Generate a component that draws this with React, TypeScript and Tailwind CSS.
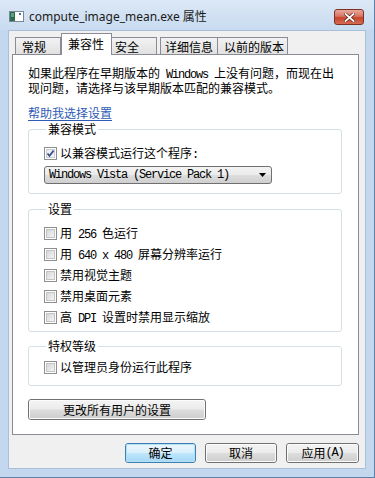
import React from 'react';

const L = ({ children }: { children: React.ReactNode }) => (
  <span className="font-['Liberation_Mono',monospace] text-[12px] leading-none tracking-[-1.2px] whitespace-pre">{children}</span>
);

function Check({ checked, children }: { checked?: boolean; children: React.ReactNode }) {
  return (
    <div className="flex items-center gap-[3px] h-[14px] leading-[14px]">
      <div className="w-[13px] h-[13px] border border-[#8e8f8f] bg-white p-[1px] shrink-0">
        <div className={`w-full h-full relative ${checked ? 'bg-gradient-to-br from-[#e9ecf3] to-[#f7f8fb] border border-[#c6cbd6]' : 'bg-gradient-to-br from-[#d6d7d9] to-[#f4f4f4] border border-[#c4c4c4]'}`}>
          {checked && (
            <svg viewBox="0 0 9 9" className="absolute -left-[1px] -top-[1px] w-[9px] h-[9px]">
              <path d="M1.5 4.5 L3.5 6.8 L7.6 1.6" fill="none" stroke="#3c4f86" strokeWidth="1.7" />
            </svg>
          )}
        </div>
      </div>
      <span>{children}</span>
    </div>
  );
}

function Group({ label, children, className }: { label: string; children: React.ReactNode; className: string }) {
  return (
    <fieldset className={`w-[314px] border border-[#d5dfe5] rounded-[3px] pl-[15px] ${className}`}>
      <legend className="ml-[2px] px-[2px] leading-[14px]">{label}</legend>
      {children}
    </fieldset>
  );
}

function Btn({ children, def, className }: { children: React.ReactNode; def?: boolean; className: string }) {
  return (
    <div className={`rounded-[3px] border ${def ? 'border-[#3c7fb1]' : 'border-[#707070]'} flex items-center justify-center leading-[14px] ${className}`}>
      <div className={`w-full h-full rounded-[2px] border ${def ? 'border-[#b4e0f7] bg-[linear-gradient(to_bottom,#eaf6fd_0%,#d9f0fc_48%,#bee6fd_52%,#a7d9f5_100%)]' : 'border-[#fbfbfb] bg-[linear-gradient(to_bottom,#f3f3f3_0%,#ebebeb_48%,#dddddd_52%,#cfcfcf_100%)]'} flex items-center justify-center`}>
        {children}
      </div>
    </div>
  );
}

export default function App() {
  return (
    <div className="w-[375px] h-[478px] flex flex-col bg-[#c3d7ee] border-r border-b border-[#5f80a6] font-['Noto_Sans_CJK_SC',sans-serif] text-[12px] text-black overflow-hidden">
      {/* title bar */}
      <div className="h-[30px] shrink-0 flex items-start px-[8px] bg-gradient-to-b from-[#dce8f5] to-[#c8dbf0]">
        <svg width="16" height="16" viewBox="0 0 16 16" className="mt-[8px] ml-[1px]">
          <rect x="0.5" y="3.5" width="14" height="10" fill="#ffffff" stroke="#7a8796" />
          <rect x="1" y="4" width="5" height="9" fill="#2e6b4f" />
          <rect x="2" y="5" width="3" height="4" fill="#5aa27a" />
          <rect x="10" y="5" width="2" height="2" fill="#4a6fa8" />
        </svg>
        <span className="ml-[4px] mt-[9px] font-['Noto_Sans','Noto_Sans_CJK_SC',sans-serif] text-[12px] leading-[16px] text-[#1a1a1a]">
          compute_image_mean.exe 属性
        </span>
        <div className="ml-auto mt-[9px] mr-[2px] w-[30px] h-[16px] rounded-[3px] border border-[#7a3225] bg-[linear-gradient(to_bottom,#e9a99d_0%,#d8735f_45%,#c7452d_55%,#d66b52_100%)] flex items-center justify-center">
          <svg width="11" height="9" viewBox="0 0 11 9">
            <path d="M1.5 1 L9.5 8 M9.5 1 L1.5 8" stroke="#5a2016" strokeWidth="3.2" strokeLinecap="square" />
            <path d="M1.5 1 L9.5 8 M9.5 1 L1.5 8" stroke="#ffffff" strokeWidth="1.8" strokeLinecap="square" />
          </svg>
        </div>
      </div>

      {/* client area */}
      <div className="flex-1 mx-[8px] mb-[8px] bg-[#f0f0f0] border border-[#a9bfd8] flex flex-col">
        {/* tabs */}
        <div className="flex items-end pl-[6px] pt-[2px] leading-[14px]">
          <div className="w-[46px] h-[17px] border border-b-0 border-[#898c95] bg-gradient-to-b from-[#f2f2f2] to-[#e1e1e1] pl-[6px] pt-[2px]">常规</div>
          <div className="w-[51px] h-[22px] -mb-[1px] relative z-10 border border-b-0 border-[#898c95] bg-white pl-[6px] pt-[3px]">兼容性</div>
          <div className="w-[45px] h-[17px] border border-b-0 border-l-0 border-[#898c95] bg-gradient-to-b from-[#f2f2f2] to-[#e1e1e1] pl-[3px] pt-[2px]">安全</div>
          <div className="ml-[3px] w-[58px] h-[17px] border border-b-0 border-[#898c95] bg-gradient-to-b from-[#f2f2f2] to-[#e1e1e1] pl-[4px] pt-[2px]">详细信息</div>
          <div className="w-[70px] h-[17px] border border-b-0 border-l-0 border-[#898c95] bg-gradient-to-b from-[#f2f2f2] to-[#e1e1e1] pl-[6px] pt-[2px]">以前的版本</div>
        </div>

        {/* panel */}
        <div className="ml-[3px] mr-[6px] h-[381px] border border-[#898c95] bg-white pl-[15px] pt-[11px]">
          <p className="leading-[14px]">
            如果此程序在早期版本的<L> Windows </L>上没有问题，而现在出
            <br />
            现问题，请选择与该早期版本匹配的兼容模式。
          </p>
          <div className="mt-[11px] leading-[14px] text-[#2d5bb5] underline underline-offset-[2px]">帮助我选择设置</div>

          <Group label="兼容模式" className="mt-[2px] pb-[9px]">
            <div className="mt-[10px]">
              <Check checked>以兼容模式运行这个程序<L>:</L></Check>
            </div>
            <div className="mt-[6px] w-[228px] h-[18px] rounded-[3px] border border-[#707070] bg-[linear-gradient(to_bottom,#f3f3f3_0%,#ebebeb_48%,#dddddd_52%,#cfcfcf_100%)] flex items-center pl-[4px] pr-[5px] justify-between">
              <L>Windows Vista (Service Pack 1)</L>
              <svg width="7" height="4" viewBox="0 0 7 4"><path d="M0 0 H7 L3.5 4 Z" fill="#000" /></svg>
            </div>
          </Group>

          <Group label="设置" className="mt-[8px] pb-[7px]">
            <div className="mt-[10px] flex flex-col gap-[7px]">
              <Check>用<L> 256 </L>色运行</Check>
              <Check>用<L> 640 x 480 </L>屏幕分辨率运行</Check>
              <Check>禁用视觉主题</Check>
              <Check>禁用桌面元素</Check>
              <Check>高<L> DPI </L>设置时禁用显示缩放</Check>
            </div>
          </Group>

          <Group label="特权等级" className="mt-[7px] pb-[11px]">
            <div className="mt-[7px]">
              <Check>以管理员身份运行此程序</Check>
            </div>
          </Group>

          <Btn className="mt-[13px] w-[178px] h-[21px]">更改所有用户的设置</Btn>
        </div>

        {/* dialog buttons */}
        <div className="flex justify-end gap-[9px] pr-[6px] mt-[8px]">
          <Btn def className="w-[71px] h-[20px]">确定</Btn>
          <Btn className="w-[72px] h-[20px]">取消</Btn>
          <Btn className="w-[73px] h-[20px]">应用<L>(A)</L></Btn>
        </div>
      </div>
    </div>
  );
}
